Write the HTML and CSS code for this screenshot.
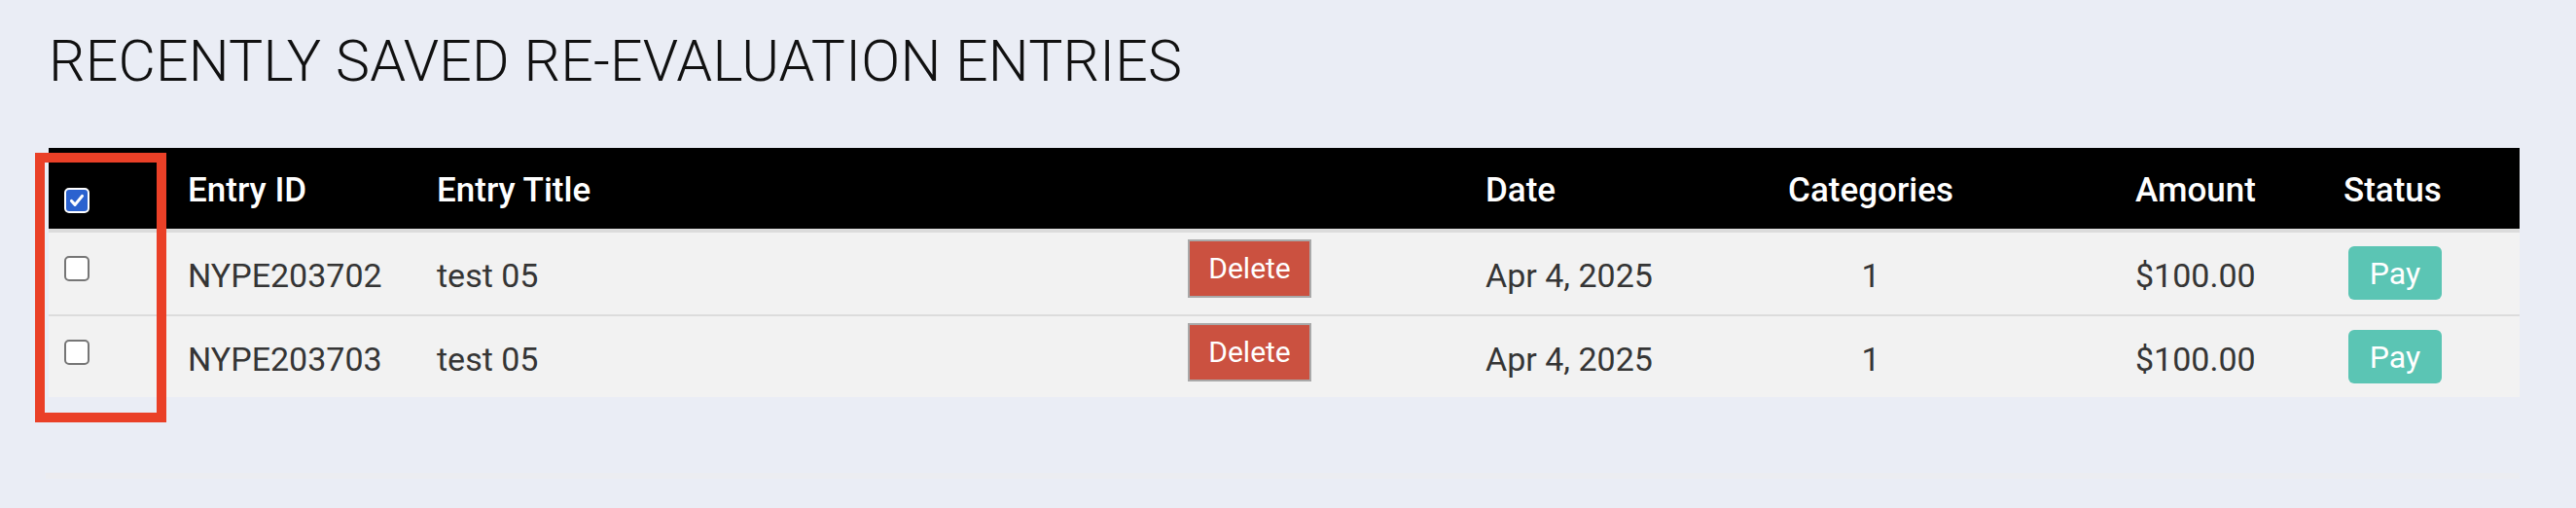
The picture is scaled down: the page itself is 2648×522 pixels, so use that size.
FILE: index.html
```html
<!DOCTYPE html>
<html lang="en">
<head>
<meta charset="utf-8">
<title>Recently Saved Re-Evaluation Entries</title>
<link rel="stylesheet" href="styles.css">
</head>
<body>
<div class="page">
  <h1 class="title">RECENTLY SAVED RE-EVALUATION ENTRIES</h1>
  <div class="table-wrap">
    <table class="entries">
      <colgroup>
        <col class="c-check">
        <col class="c-id">
        <col class="c-title">
        <col class="c-action">
        <col class="c-date">
        <col class="c-cat">
        <col class="c-amount">
        <col class="c-status">
      </colgroup>
      <thead>
        <tr class="row-head">
          <th class="cell-check"><input class="check" type="checkbox" checked aria-label="Select all"></th>
          <th>Entry ID</th>
          <th>Entry Title</th>
          <th></th>
          <th class="cell-date">Date</th>
          <th class="center">Categories</th>
          <th class="cell-amount">Amount</th>
          <th>Status</th>
        </tr>
      </thead>
      <tbody>
        <tr class="row-first">
          <td class="cell-check"><input class="check" type="checkbox" aria-label="Select NYPE203702"></td>
          <td>NYPE203702</td>
          <td>test 05</td>
          <td class="cell-action"><button class="btn-delete" type="button">Delete</button></td>
          <td class="cell-date">Apr 4, 2025</td>
          <td class="center">1</td>
          <td class="cell-amount">$100.00</td>
          <td class="cell-status"><button class="btn-pay" type="button">Pay</button></td>
        </tr>
        <tr class="row-last">
          <td class="cell-check"><input class="check" type="checkbox" aria-label="Select NYPE203703"></td>
          <td>NYPE203703</td>
          <td>test 05</td>
          <td class="cell-action"><button class="btn-delete" type="button">Delete</button></td>
          <td class="cell-date">Apr 4, 2025</td>
          <td class="center">1</td>
          <td class="cell-amount">$100.00</td>
          <td class="cell-status"><button class="btn-pay" type="button">Pay</button></td>
        </tr>
      </tbody>
    </table>
    <div class="highlight" aria-hidden="true"></div>
  </div>
  <div class="divider"></div>
</div>
</body>
</html>
```

FILE: styles.css
```css
* { box-sizing: border-box; }

html, body {
  margin: 0;
  padding: 0;
  background: #eaedf5;
}

body {
  font-family: Roboto, "Liberation Sans", Arial, sans-serif;
  color: #333333;
}

.page {
  padding: 33px 0 0 50px;
}

.title {
  margin: 0 0 60px 0;
  font-size: 59px;
  line-height: 59px;
  font-weight: 300;
  letter-spacing: 0.2px;
  color: #111111;
  white-space: nowrap;
}

.table-wrap {
  position: relative;
  width: 2540px;
}

.entries {
  width: 2540px;
  table-layout: fixed;
  border-collapse: separate;
  border-spacing: 0;
}

.c-check { width: 143px; }
.c-id { width: 256px; }
.c-title { width: 772px; }
.c-action { width: 306px; }
.c-date { width: 273px; }
.c-cat { width: 246px; }
.c-amount { width: 363px; }
.c-status { width: 181px; }

.row-head { height: 87px; }
.row-first { height: 86px; }
.row-last { height: 83px; }

.entries th,
.entries td {
  padding: 24px 0 0 0;
  vertical-align: top;
  text-align: left;
  white-space: nowrap;
}

.entries th {
  background: #000000;
  color: #ffffff;
  font-size: 35px;
  font-weight: 500;
  line-height: 40px;
  border-bottom: 4px solid #dcdcdc;
}

.entries td {
  background: #f2f2f2;
  font-size: 34px;
  font-weight: 400;
  line-height: 40px;
  color: #353535;
}

.row-first td {
  border-bottom: 2px solid #dcdcdc;
}

.entries .cell-check { padding-left: 16px; }
.entries th.cell-check { padding-top: 41px; }

.entries .center { text-align: center; }
.entries .cell-amount { padding-left: 149px; }
.entries td.cell-action { padding-top: 7px; }
.entries td.cell-status { padding-top: 14px; padding-left: 5px; }

.check {
  appearance: none;
  -webkit-appearance: none;
  display: block;
  width: 26px;
  height: 26px;
  margin: 0;
  border: 2px solid #767676;
  border-radius: 5px;
  background: #ffffff;
}

.check:checked {
  border: 2px solid #ffffff;
  background: #2b62cf url("data:image/svg+xml,%3Csvg xmlns='http://www.w3.org/2000/svg' viewBox='0 0 16 16'%3E%3Cpath d='M3.6 8.4l2.9 3.1 5.9-7.2' fill='none' stroke='white' stroke-width='2.5' stroke-linecap='round' stroke-linejoin='round'/%3E%3C/svg%3E") center / 20px 20px no-repeat;
}

.btn-delete {
  display: flex;
  align-items: center;
  justify-content: center;
  width: 127px;
  height: 60px;
  padding: 0;
  margin: 0;
  border: 2px solid #a9a9a9;
  border-radius: 0;
  background: #cb5140;
  color: #ffffff;
  font-family: Roboto, "Liberation Sans", Arial, sans-serif;
  font-size: 30px;
  font-weight: 400;
  line-height: 1;
}

.btn-pay {
  display: flex;
  align-items: center;
  justify-content: center;
  width: 96px;
  height: 55px;
  padding: 0;
  margin: 0;
  border: 0;
  border-radius: 6px;
  background: #5bc5b4;
  color: #ffffff;
  font-family: Roboto, "Liberation Sans", Arial, sans-serif;
  font-size: 32px;
  font-weight: 400;
  line-height: 1;
}

.highlight {
  position: absolute;
  left: -14px;
  top: 5px;
  width: 135px;
  height: 277px;
  border: 10px solid #ea4027;
  pointer-events: none;
}

.divider {
  margin: 78px 0 0 -3px;
  width: 2543px;
  height: 6px;
  background: #ecedf1;
}
```
